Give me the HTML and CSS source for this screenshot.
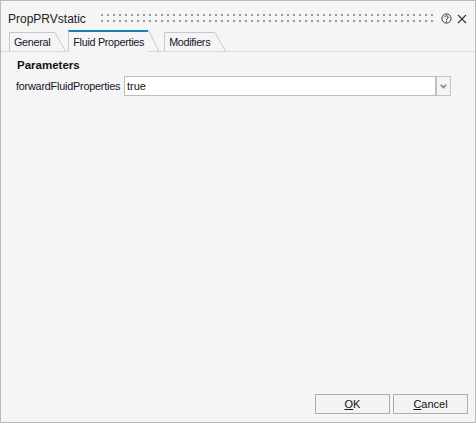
FILE: index.html
```html
<!DOCTYPE html>
<html>
<head>
<meta charset="utf-8">
<link rel="stylesheet" href="styles.css">
</head>
<body>
<div class="window">
  <div class="titlebar">
    <span class="title">PropPRVstatic</span>
    <span class="grip"></span>
    <svg class="help" width="11" height="11" viewBox="0 0 11 11">
      <circle cx="5.5" cy="5.5" r="4.6" fill="none" stroke="#333" stroke-width="1"/>
      <path d="M3.9 4.3a1.6 1.6 0 1 1 2.2 1.5c-.45.2-.6.5-.6.95v.35" fill="none" stroke="#333" stroke-width="1"/>
      <circle cx="5.5" cy="8.2" r=".65" fill="#333"/>
    </svg>
    <svg class="close" width="10" height="10" viewBox="0 0 10 10">
      <path d="M1 1L9 9M9 1L1 9" stroke="#333" stroke-width="1.1"/>
    </svg>
  </div>
  <div class="tabs">
    <div class="tab">General</div>
    <div class="tab tab-active">Fluid Properties</div>
    <div class="tab">Modifiers</div>
  </div>
  <div class="content">
    <div class="heading">Parameters</div>
    <div class="row">
      <span class="label">forwardFluidProperties</span>
      <div class="combo">
        <div class="field">true</div>
        <div class="drop">
          <svg width="7" height="5" viewBox="0 0 7 5"><path d="M0.8 0.8L3.5 3.6L6.2 0.8" fill="none" stroke="#808080" stroke-width="1.6"/></svg>
        </div>
      </div>
    </div>
  </div>
  <div class="footer">
    <button class="btn"><u>O</u>K</button>
    <button class="btn"><u>C</u>ancel</button>
  </div>
</div>
</body>
</html>
```

FILE: styles.css
```css
html, body {
  margin: 0;
  padding: 0;
  background: #f5f5f5;
}

.window {
  width: 476px;
  height: 423px;
  box-sizing: border-box;
  border: 1px solid #b9b9b9;
  background: #f5f5f5;
  display: flex;
  flex-direction: column;
  font-family: "Liberation Sans", Arial, sans-serif;
  color: #1a1a1a;
}

.titlebar {
  display: flex;
  align-items: flex-start;
  height: 29px;
  padding: 0 8px 0 7px;
  flex: none;
}

.title {
  margin-top: 11px;
  font-size: 12px;
  line-height: 14px;
  color: #222;
}

.grip {
  flex: 1;
  height: 8px;
  margin: 13px 7px 0 15px;
  background-image: conic-gradient(at 2px 2px, transparent 75%, #9c9c9c 0);
  background-size: 6px 6px;
}

.help {
  margin-top: 12px;
  display: block;
}

.close {
  margin: 13px 0 0 5px;
  display: block;
}

.tabs {
  display: flex;
  align-items: flex-end;
  height: 21px;
  padding-left: 8px;
  border-bottom: 1px solid #d9d9d9;
  flex: none;
}

.tab {
  position: relative;
  height: 18px;
  line-height: 18px;
  padding: 0 4px 0 4px;
  margin-right: 14px;
  border-left: 1px solid #c8c8c8;
  border-top: 1px solid #c8c8c8;
  font-size: 10.8px;
  letter-spacing: -0.3px;
  color: #14142a;
  background: #f5f5f5;
}

.tab::after {
  content: "";
  position: absolute;
  left: 100%;
  top: -1px;
  width: 11px;
  height: calc(100% + 1px);
  border-left: 1px solid #c8c8c8;
  transform: skewX(30deg);
  transform-origin: top left;
}

.tab-active {
  height: 18px;
  padding-top: 1px;
  padding-bottom: 1px;
  border-top: 2px solid #1c7eb0;
  margin-bottom: -1px;
  z-index: 1;
  margin-right: 16px;
}

.tab-active::after {
  top: -2px;
  height: calc(100% + 2px);
  transform: skewX(26deg);
}

.content {
  padding: 0 24px 0 15px;
  flex: none;
}

.heading {
  margin: 6px 0 0 1px;
  font-size: 11.5px;
  line-height: 14px;
  font-weight: bold;
  color: #111;
}

.row {
  display: flex;
  align-items: center;
  margin-top: 4px;
  height: 20px;
}

.label {
  width: 108px;
  flex: none;
  font-size: 10.8px;
  letter-spacing: -0.2px;
  color: #14142a;
  white-space: nowrap;
}

.combo {
  flex: 1;
  display: flex;
  height: 20px;
}

.field {
  flex: 1;
  box-sizing: border-box;
  height: 20px;
  border: 1px solid #bcbcbc;
  background: #fff;
  padding-left: 2px;
  font-size: 11px;
  line-height: 18px;
  color: #111;
}

.drop {
  width: 15px;
  height: 20px;
  box-sizing: border-box;
  border: 1px solid #c4c4c4;
  background: #f5f5f5;
  display: flex;
  align-items: center;
  justify-content: center;
}

.drop svg {
  display: block;
}

.footer {
  margin-top: auto;
  display: flex;
  justify-content: flex-end;
  gap: 3px;
  padding: 0 7px 8px 0;
}

.btn {
  width: 75px;
  height: 20px;
  box-sizing: border-box;
  border: 1px solid #adadad;
  background: #f3f3f3;
  font-family: "Liberation Sans", Arial, sans-serif;
  font-size: 11px;
  color: #111;
  padding: 0;
  margin: 0;
  line-height: 18px;
}
```
